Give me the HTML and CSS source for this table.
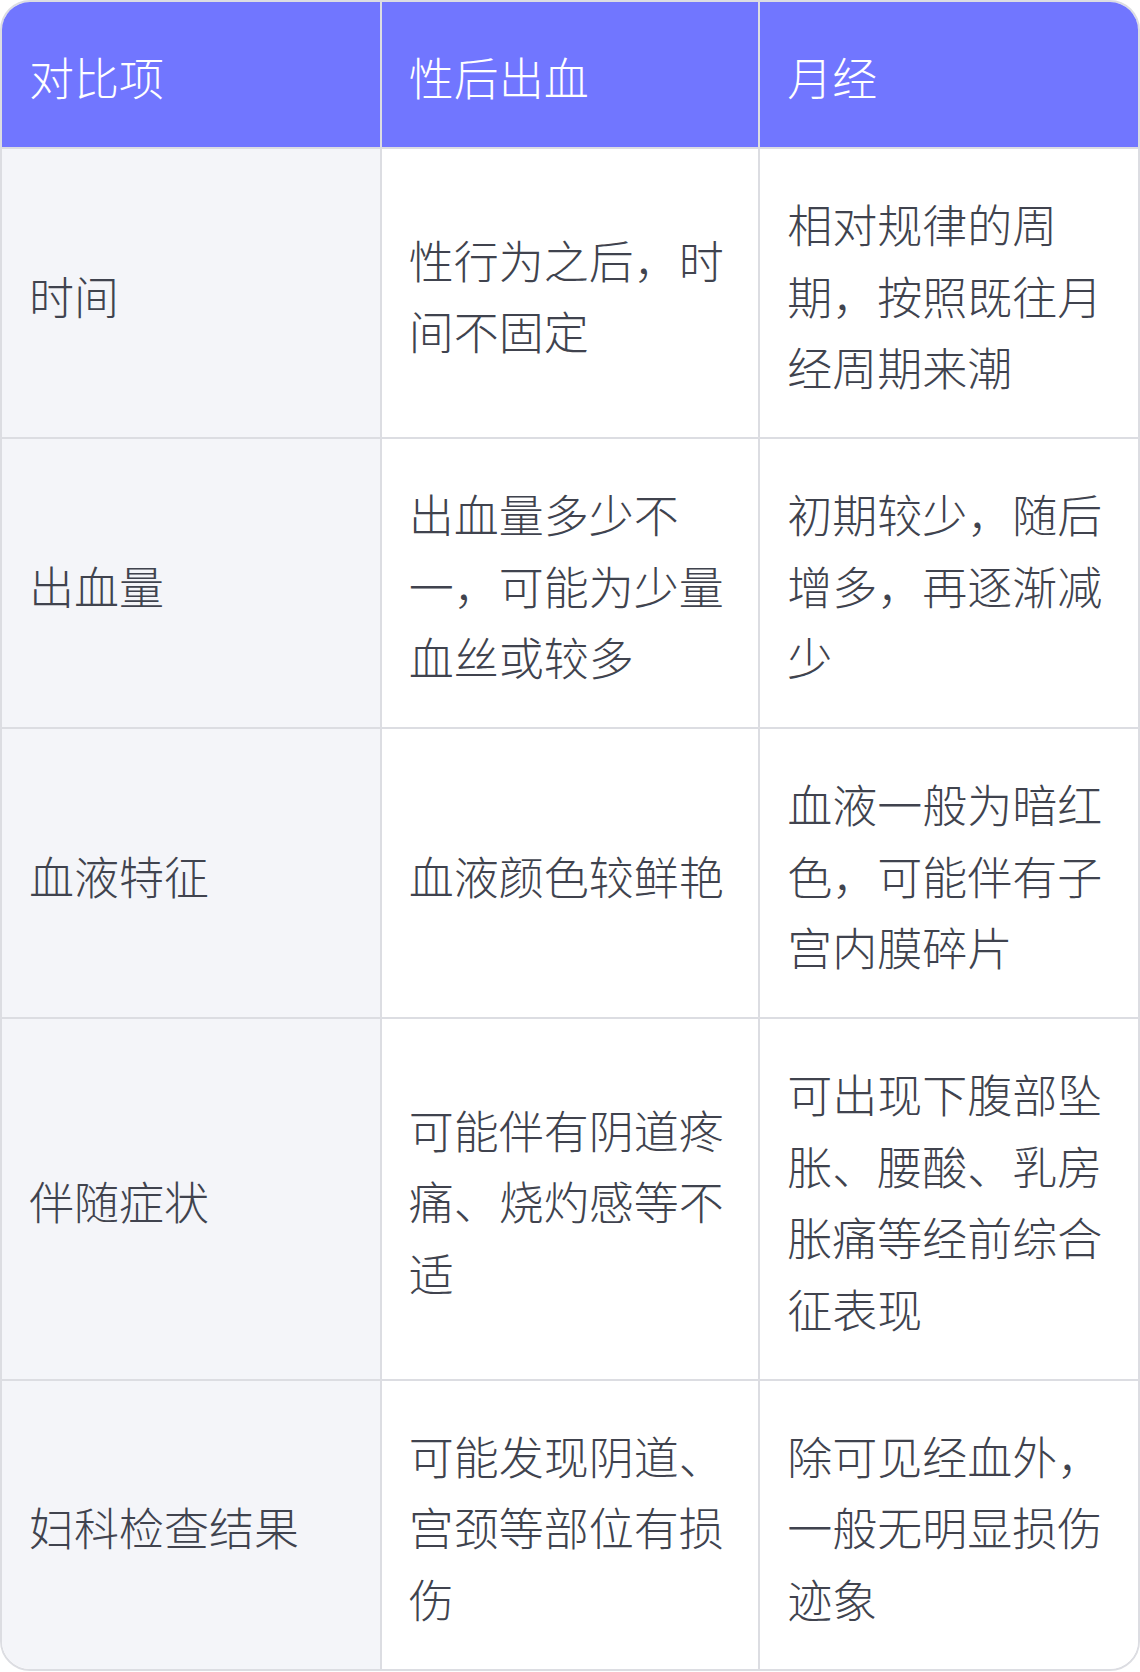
FILE: index.html
```html
<!DOCTYPE html>
<html lang="zh-CN">
<head>
<meta charset="utf-8">
<title>性后出血与月经对比</title>
<link rel="stylesheet" href="styles.css">
</head>
<body>
<div class="wrap">
  <table class="cmp">
    <thead>
      <tr><th>对比项</th><th>性后出血</th><th>月经</th></tr>
    </thead>
    <tbody>
      <tr><td>时间</td><td>性行为之后，时间不固定</td><td>相对规律的周期，按照既往月经周期来潮</td></tr>
      <tr><td>出血量</td><td>出血量多少不一，可能为少量血丝或较多</td><td>初期较少，随后增多，再逐渐减少</td></tr>
      <tr><td>血液特征</td><td>血液颜色较鲜艳</td><td>血液一般为暗红色，可能伴有子宫内膜碎片</td></tr>
      <tr><td>伴随症状</td><td>可能伴有阴道疼痛、烧灼感等不适</td><td>可出现下腹部坠胀、腰酸、乳房胀痛等经前综合征表现</td></tr>
      <tr><td>妇科检查结果</td><td>可能发现阴道、宫颈等部位有损伤</td><td>除可见经血外，一般无明显损伤迹象</td></tr>
    </tbody>
  </table>
</div>
</body>
</html>
```

FILE: styles.css
```css
html, body {
  margin: 0;
  padding: 0;
  background: #ffffff;
}

.wrap {
  width: 1140px;
  box-sizing: border-box;
  border: 2px solid #dcdde2;
  border-radius: 30px;
  overflow: hidden;
}

.cmp {
  width: 100%;
  border-collapse: collapse;
  table-layout: fixed;
  font-family: "Noto Sans CJK SC", "Noto Sans", sans-serif;
  font-size: 45px;
  line-height: 71.5px;
  color: #40434e;
}

.cmp th,
.cmp td {
  text-align: left;
  vertical-align: middle;
  padding: 39px 27px 34.5px 27px;
  border: 2px solid #dcdde2;
  font-weight: 300;
}

.cmp th {
  background: #7176ff;
  color: #ffffff;
}

.cmp td:first-child {
  background: #f4f5f9;
}

.cmp td:nth-child(2),
.cmp td:nth-child(3) {
  background: #ffffff;
}

.cmp tr > :first-child { border-left: none; }
.cmp tr > :last-child { border-right: none; }
.cmp thead tr > * { border-top: none; }
.cmp tbody tr:last-child > * { border-bottom: none; }
```
